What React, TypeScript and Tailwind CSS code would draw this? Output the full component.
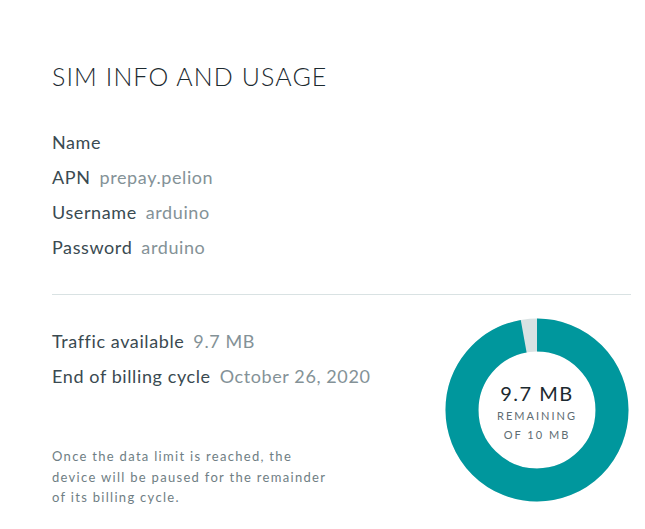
export default function App() {
  const info = [
    { label: 'Name', value: '' },
    { label: 'APN', value: 'prepay.pelion' },
    { label: 'Username', value: 'arduino' },
    { label: 'Password', value: 'arduino' },
  ]
  const usage = [
    { label: 'Traffic available', value: '9.7 MB' },
    { label: 'End of billing cycle', value: 'October 26, 2020' },
  ]

  const r = 75
  const circ = 2 * Math.PI * r
  const remaining = 9.7 / 10

  return (
    <div
      className="w-[645px] h-[529px] bg-white pl-[52px] pr-[14px] pt-[60px] overflow-hidden"
      style={{ fontFamily: 'Lato, "Open Sans", sans-serif' }}
    >
      {/* Title */}
      <h1 className="text-[25px] leading-[32px] font-light tracking-[1.1px] text-[#1c2a30]">
        SIM INFO AND USAGE
      </h1>

      {/* SIM details */}
      <div className="mt-[33px] flex flex-col">
        {info.map((row) => (
          <div key={row.label} className="h-[35px] leading-[35px] text-[18px] tracking-[0.6px]">
            <span className="text-[#3a4a51]">{row.label}</span>
            {row.value && <span className="ml-[9px] text-[#849297]">{row.value}</span>}
          </div>
        ))}
      </div>

      <div className="mt-[29px] h-px bg-[#d9e2e3]" />

      {/* Usage */}
      <div className="flex justify-between">
        <div className="flex flex-col">
          <div className="mt-[29px] flex flex-col">
            {usage.map((row) => (
              <div key={row.label} className="h-[35px] leading-[35px] text-[18px] tracking-[0.6px]">
                <span className="text-[#3a4a51]">{row.label}</span>
                <span className="ml-[9px] text-[#849297]">{row.value}</span>
              </div>
            ))}
          </div>
          <p className="mt-[52px] w-[282px] text-[13px] leading-[20.5px] tracking-[1.3px] text-[#6f7e84]">
            Once the data limit is reached, the device will be paused for the remainder of its billing cycle.
          </p>
        </div>

        {/* Donut */}
        <div className="relative mt-[23px] mr-[2px] w-[184px] h-[184px]">
          <svg width="184" height="184" viewBox="0 0 184 184">
            <circle cx="92" cy="92" r={r} fill="none" stroke="#d9e2e3" strokeWidth="33" />
            <circle
              cx="92"
              cy="92"
              r={r}
              fill="none"
              stroke="#00979d"
              strokeWidth="33"
              strokeDasharray={`${circ * remaining} ${circ}`}
              transform="rotate(-90 92 92)"
            />
          </svg>
          <div className="absolute inset-0 flex flex-col items-center justify-center pt-[4px]">
            <div className="text-[20px] leading-[24px] tracking-[1.5px] text-[#1c2a30]">9.7 MB</div>
            <div className="mt-[1px] text-[11px] leading-[19px] tracking-[2px] text-[#5e6c72]">REMAINING</div>
            <div className="text-[11px] leading-[19px] tracking-[2px] text-[#5e6c72]">OF 10 MB</div>
          </div>
        </div>
      </div>
    </div>
  )
}
